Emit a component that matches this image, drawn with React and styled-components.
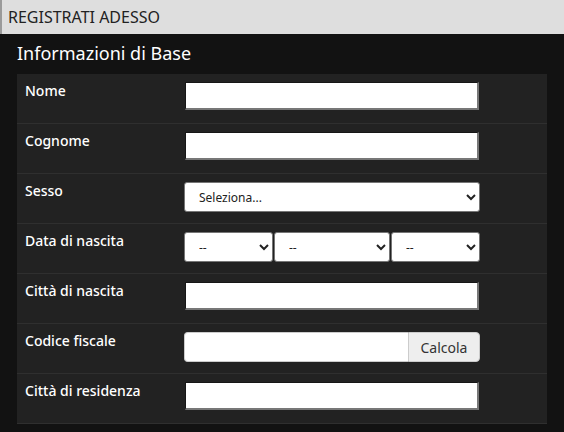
import React from 'react';
import styled, { createGlobalStyle } from 'styled-components';

const GlobalStyle = createGlobalStyle`
  body {
    margin: 0;
    background: #121212;
    font-family: "Noto Sans", "Open Sans", sans-serif;
  }
`;

const Page = styled.div`
  width: 564px;
  min-height: 432px;
  background: #121212;
`;

const TopBar = styled.div`
  height: 34px;
  line-height: 34px;
  background: #dedede;
  border-left: 2px solid #9a9a9a;
  padding-left: 6px;
  font-size: 16px;
  color: #222222;
`;

const Section = styled.section`
  padding: 0 17px;
`;

const SectionTitle = styled.h2`
  margin: 0;
  height: 40px;
  line-height: 38px;
  font-size: 18px;
  font-weight: 400;
  color: #ffffff;
`;

const Panel = styled.div`
  background: #222222;
`;

const Row = styled.div`
  display: grid;
  grid-template-columns: 167px 1fr;
  height: 49px;
  border-bottom: 1px solid #2f2f2f;
`;

const Label = styled.label`
  padding: 7px 0 0 8px;
  font-size: 14px;
  line-height: 20px;
  font-weight: 500;
  color: #ffffff;
`;

const Control = styled.div`
  display: flex;
  gap: 1px;
  padding-top: 8px;
  padding-left: ${(p) => (p.$inset ? '1px' : '0')};
  align-items: flex-start;
`;

const TextInput = styled.input`
  box-sizing: border-box;
  width: 294px;
  height: 28px;
  margin: 0;
  background: #ffffff;
  border-style: solid;
  border-width: 1px 2px 2px 1px;
  border-color: #161616 #777777 #777777 #161616;
  outline: none;
`;

const Select = styled.select`
  box-sizing: border-box;
  width: ${(p) => p.$w}px;
  height: 30px;
  margin: 0;
  padding: 0 0 0 ${(p) => p.$pad || 10}px;
  background: #ffffff;
  border: 1px solid #767676;
  border-radius: 3px;
  font-family: "Noto Sans", "Open Sans", sans-serif;
  font-size: 12px;
  color: #222222;
`;

const Group = styled.div`
  display: flex;
  width: 296px;
  height: 30px;
`;

const GroupInput = styled.input`
  box-sizing: border-box;
  flex: 1;
  height: 30px;
  margin: 0;
  border: 1px solid #cccccc;
  border-right: none;
  border-radius: 4px 0 0 4px;
  background: #ffffff;
  outline: none;
`;

const GroupButton = styled.button`
  box-sizing: border-box;
  width: 72px;
  height: 30px;
  margin: 0;
  border: 1px solid #cccccc;
  border-radius: 0 4px 4px 0;
  background: #eeeeee;
  font-family: "Noto Sans", "Open Sans", sans-serif;
  font-size: 14px;
  color: #333333;
  padding: 0;
`;

const Field = ({ label, children, inset }) => (
  <Row>
    <Label>{label}</Label>
    <Control $inset={inset}>{children}</Control>
  </Row>
);

const App = () => (
  <Page>
    <GlobalStyle />
    <TopBar>REGISTRATI ADESSO</TopBar>
    <Section>
      <SectionTitle>Informazioni di Base</SectionTitle>
      <Panel>
        <Field label="Nome" inset>
          <TextInput type="text" />
        </Field>
        <Field label="Cognome" inset>
          <TextInput type="text" />
        </Field>
        <Field label="Sesso">
          <Select $w={296} $pad={10}>
            <option>Seleziona...</option>
          </Select>
        </Field>
        <Field label="Data di nascita">
          <Select $w={89}>
            <option>--</option>
          </Select>
          <Select $w={116}>
            <option>--</option>
          </Select>
          <Select $w={89}>
            <option>--</option>
          </Select>
        </Field>
        <Field label="Città di nascita" inset>
          <TextInput type="text" />
        </Field>
        <Field label="Codice fiscale">
          <Group>
            <GroupInput type="text" />
            <GroupButton type="button">Calcola</GroupButton>
          </Group>
        </Field>
        <Field label="Città di residenza" inset>
          <TextInput type="text" />
        </Field>
      </Panel>
    </Section>
  </Page>
);

export default App;
